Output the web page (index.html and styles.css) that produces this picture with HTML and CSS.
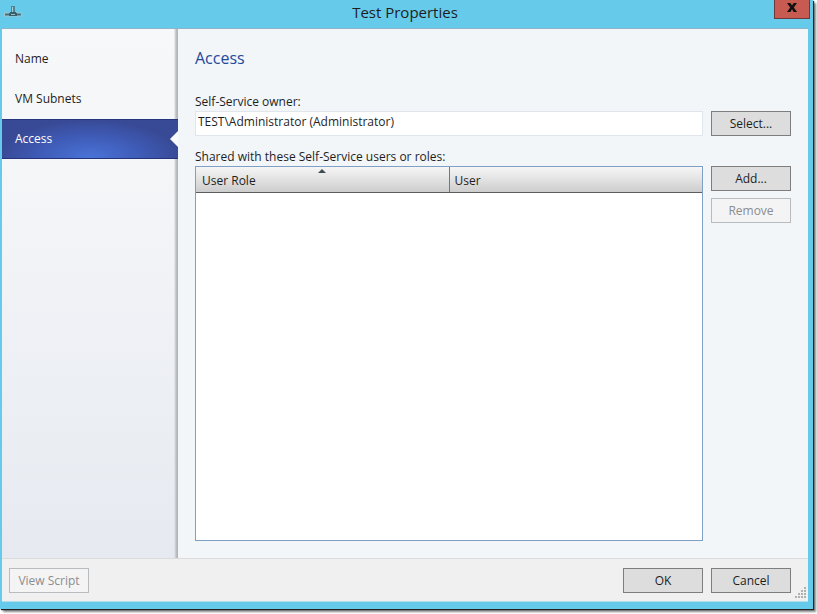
FILE: index.html
```html
<!DOCTYPE html>
<html lang="en">
<head>
<meta charset="utf-8">
<title>Test Properties</title>
<link rel="stylesheet" href="styles.css">
</head>
<body>
<div class="window">
    <header class="titlebar">
        <svg class="app-icon" width="18" height="12" viewBox="0 0 18 12">
            <path d="M0 8.5h18" stroke="#a9c4c9" stroke-width="4"/>
            <path d="M1 8.5h16" stroke="#3d7180" stroke-width="2"/>
            <path d="M7 0h4v7H7z" fill="#4f8592"/>
            <path d="M8 1h1v6H8z" fill="#a5cdd2"/>
            <path d="M6 6h6v1h1v3H5V7h1z" fill="#37616d"/>
            <path d="M7 8h4v1H7z" fill="#8fc0c6"/>
        </svg>
        <h1 class="title">Test Properties</h1>
        <button class="close" type="button" aria-label="Close">
            <svg width="10" height="9" viewBox="0 0 10 9">
                <path d="M0 0h3.4L5 2.6 6.6 0H10L6.8 4.4 10 9H6.6L5 6.2 3.4 9H0l3.2-4.6z" fill="#111"/>
            </svg>
        </button>
    </header>

    <div class="client">
        <div class="pages">
            <nav class="sidebar">
                <a class="tab" href="#name">Name</a>
                <a class="tab" href="#subnets">VM Subnets</a>
                <a class="tab selected" href="#access">Access</a>
            </nav>

            <main class="page" id="access">
                <h2 class="heading">Access</h2>

                <label class="caption" for="owner">Self-Service owner:</label>
                <div class="row">
                    <input class="owner" id="owner" type="text" value="TEST\Administrator (Administrator)">
                    <button class="btn" type="button">Select...</button>
                </div>

                <p class="caption" id="shared">Shared with these Self-Service users or roles:</p>
                <div class="row fill">
                    <div class="list">
                        <table class="grid" aria-labelledby="shared">
                            <thead>
                                <tr>
                                    <th class="sorted">User Role</th>
                                    <th>User</th>
                                </tr>
                            </thead>
                            <tbody></tbody>
                        </table>
                    </div>
                    <div class="side-buttons">
                        <button class="btn" type="button">Add...</button>
                        <button class="btn" type="button" disabled>Remove</button>
                    </div>
                </div>
            </main>
        </div>

        <footer class="footer">
            <button class="btn" type="button" disabled>View Script</button>
            <div class="actions">
                <button class="btn" type="button">OK</button>
                <button class="btn" type="button">Cancel</button>
            </div>
            <svg class="grip" width="12" height="12" viewBox="0 0 12 12" fill="#b0b0b0">
                <path d="M10 0h2v2h-2zM7 3h2v2H7zM10 3h2v2h-2zM4 6h2v2H4zM7 6h2v2H7zM10 6h2v2h-2zM1 9h2v2H1zM4 9h2v2H4zM7 9h2v2H7zM10 9h2v2h-2z"/>
            </svg>
        </footer>
    </div>
</div>
</body>
</html>
```

FILE: styles.css
```css
* {
  box-sizing: border-box;
}

body {
  margin: 0;
  padding: 0 4px 5px 0;
  height: 100vh;
  overflow: hidden;
  background: #fff;
  color: #1e1e1e;
  font: 12px/16px "Open Sans", "Noto Sans", sans-serif;
}

/* window frame */
.window {
  display: flex;
  flex-direction: column;
  height: 100%;
  padding: 0 5px 7px 2px;
  background: #66caea;
  box-shadow: 1px 1px 1px #222, 3px 3px 2px #888;
}

.titlebar {
  position: relative;
  display: flex;
  justify-content: center;
  height: 28px;
}

.title {
  margin: 0;
  font-size: 15px;
  font-weight: normal;
  line-height: 25px;
}

.app-icon {
  position: absolute;
  left: 2px;
  top: 6px;
}

.close {
  position: absolute;
  top: 0;
  right: -2px;
  display: flex;
  align-items: center;
  justify-content: center;
  width: 36px;
  height: 19px;
  padding: 0 0 3px;
  border: 1px solid #6b3a3c;
  border-top: 0;
  background: #c75b52;
}

.client {
  flex: 1;
  display: flex;
  flex-direction: column;
  min-height: 0;
  border-top: 1px solid #8fb4cb;
  border-bottom: 1px solid #b5dcea;
}

.pages {
  flex: 1;
  display: flex;
  min-height: 0;
}

/* left side tabs */
.sidebar {
  display: flex;
  flex-direction: column;
  gap: 1px;
  width: 176px;
  padding-top: 10px;
  background: linear-gradient(to right, transparent 172px, #d4d6da 173px, #b4b4b6 175px),
    linear-gradient(#f7f8fa, #f5f6f8 25%, #f0f2f6 50%, #e6eaf0);
}

.tab {
  display: flex;
  align-items: center;
  height: 39px;
  padding-left: 13px;
  color: #1e1e1e;
  text-decoration: none;
}

.tab.selected {
  position: relative;
  height: 40px;
  color: #fff;
  border-top: 1px solid #25367f;
  border-bottom: 1px solid #25337c;
  background: radial-gradient(ellipse 90px 38px at 50% 100%, #4a74d8, #3f5cb8 55%, #384a96);
}

.tab.selected::after {
  content: "";
  position: absolute;
  right: 0;
  top: 11px;
  border: 8px solid transparent;
  border-left: 0;
  border-right-color: #f7f9fb;
}

/* page */
.page {
  flex: 1;
  display: flex;
  flex-direction: column;
  padding: 17px 17px 17px 17px;
  background: #f2f6f9;
}

.heading {
  margin: 0 0 24px;
  color: #24489c;
  font-size: 16px;
  font-weight: normal;
  line-height: 24px;
}

.caption {
  margin: 0;
  height: 17px;
}

.row {
  display: flex;
  gap: 8px;
  margin-bottom: 13px;
}

.row.fill {
  flex: 1;
  margin: 0;
}

.owner {
  flex: 1;
  height: 25px;
  padding: 0 3px 4px 2px;
  border: 1px solid #e1e6ec;
  background: #fff;
  color: #1e1e1e;
  font: inherit;
}

.btn {
  width: 80px;
  height: 25px;
  padding: 1px 0 0;
  border: 1px solid #7e7e7e;
  background: #dddddd;
  color: #1e1e1e;
  font: inherit;
}

.btn:disabled {
  border-color: #b9bcbe;
  background: #f4f4f4;
  color: #8b8d90;
}

.list {
  flex: 1;
  border: 1px solid #7f9fc4;
  background: #fff;
}

.grid {
  width: 100%;
  border-collapse: collapse;
  table-layout: fixed;
}

.grid th {
  position: relative;
  height: 25px;
  padding: 3px 5px 0;
  border-bottom: 1px solid #5c5c5c;
  background: linear-gradient(#f6f6f6, #e2e2e2 50%, #cdcdcd);
  font-weight: normal;
  text-align: left;
}

.grid th + th {
  border-left: 1px solid #777;
}

.grid th:first-child {
  padding-left: 6px;
}

.sorted::before {
  content: "";
  position: absolute;
  left: 50%;
  top: 2px;
  margin-left: -4px;
  border: 4px solid transparent;
  border-top: 0;
  border-bottom-color: #3f4c52;
}

.side-buttons {
  display: flex;
  flex-direction: column;
  gap: 7px;
}

.footer {
  position: relative;
  display: flex;
  align-items: center;
  justify-content: space-between;
  height: 43px;
  padding: 0 17px 0 7px;
  border-top: 1px solid #d9dbdd;
  background: #f0f0f0;
}

.actions {
  display: flex;
  gap: 8px;
}

.grip {
  position: absolute;
  right: 2px;
  bottom: 2px;
}
```
